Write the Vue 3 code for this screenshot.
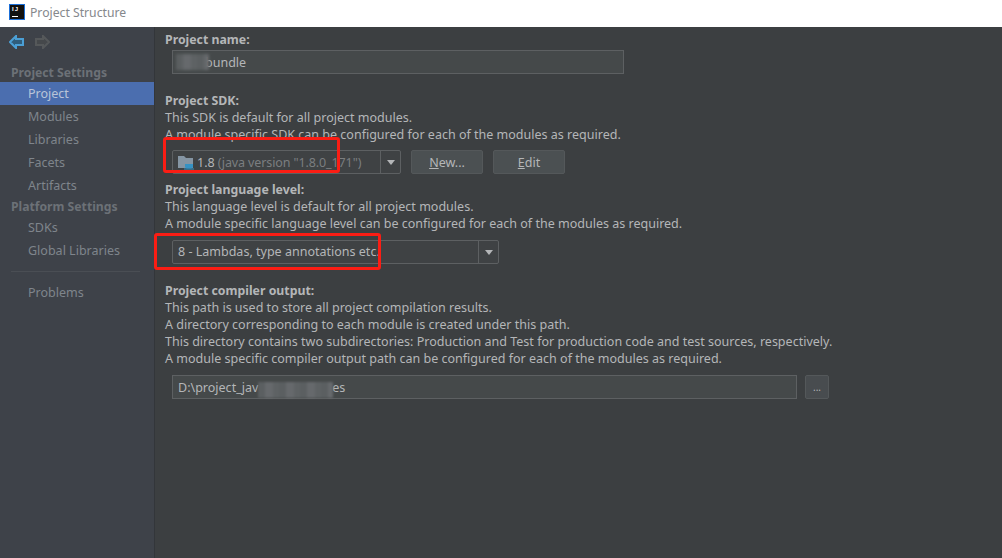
<script setup>
const projectItems = ['Modules', 'Libraries', 'Facets', 'Artifacts']
const platformItems = ['SDKs', 'Global Libraries']
</script>

<template>
  <div class="win">
    <header class="titlebar">
      <div class="logo"><span class="logo-t">IJ</span><span class="logo-u"></span></div>
      <span class="title">Project Structure</span>
    </header>
    <div class="body">
      <aside class="side">
        <div class="nav">
          <svg width="15" height="14" viewBox="0 0 15 14"><path d="M1 7 7 1v3h7v6H7v3z" fill="#2f5d7c" stroke="#4b9fd5" stroke-width="2"/></svg>
          <svg width="15" height="14" viewBox="0 0 15 14"><path d="M14 7 8 1v3H1v6h7v3z" fill="#45484b" stroke="#55585a" stroke-width="2"/></svg>
        </div>
        <div class="group first">Project Settings</div>
        <div class="item active">Project</div>
        <div v-for="i in projectItems" :key="i" class="item">{{ i }}</div>
        <div class="group">Platform Settings</div>
        <div v-for="i in platformItems" :key="i" class="item">{{ i }}</div>
        <div class="sep"></div>
        <div class="item">Problems</div>
      </aside>
      <main class="main">
        <h4 class="h first">Project name:</h4>
        <div class="field name"><span class="val">bundle</span></div>

        <h4 class="h sdk">Project SDK:</h4>
        <p>This SDK is default for all project modules.</p>
        <p>A module specific SDK can be configured for each of the modules as required.</p>
        <div class="row sdkrow">
          <div class="combo c1">
            <div class="combo-val">
              <svg class="jdk" width="17" height="16" viewBox="0 0 17 16">
                <path d="M0 2h6l2 2h7v10H0z" fill="#8595a3"/>
                <path d="M7 10h8v2.5a2 2 0 0 1-2 2H9a2 2 0 0 1-2-2z" fill="#3592c4"/>
                <path d="M6 15h10" stroke="#3592c4"/>
              </svg>
              <span>1.8</span><span class="dim">(java version "1.8.0_171")</span>
            </div>
            <div class="arrow"><i></i></div>
          </div>
          <button class="btn b1"><u>N</u>ew...</button>
          <button class="btn b2"><u>E</u>dit</button>
        </div>

        <h4 class="h lang">Project language level:</h4>
        <p>This language level is default for all project modules.</p>
        <p>A module specific language level can be configured for each of the modules as required.</p>
        <div class="combo c2">
          <div class="combo-val lvl">8 - Lambdas, type annotations etc.</div>
          <div class="arrow"><i></i></div>
        </div>

        <h4 class="h out">Project compiler output:</h4>
        <p>This path is used to store all project compilation results.</p>
        <p>A directory corresponding to each module is created under this path.</p>
        <p>This directory contains two subdirectories: Production and Test for production code and test sources, respectively.</p>
        <p>A module specific compiler output path can be configured for each of the modules as required.</p>
        <div class="row outrow">
          <div class="field path"><span class="val">D:\project_jav<span class="gap"></span>es</span></div>
          <button class="btn dots">...</button>
        </div>
      </main>
    </div>
    <div class="blur b-name"></div>
    <div class="blur b-path"></div>
    <div class="mark m1"></div>
    <div class="mark m2"></div>
  </div>
</template>

<style scoped>
.win { position: relative; width: 1002px; height: 558px; overflow: hidden; font-family: "Noto Sans", sans-serif; font-size: 12.52px; line-height: 17px; color: #b4b6b8; background: #3c3f41; }
.titlebar { height: 27px; background: #fff; display: flex; align-items: center; padding-left: 9px; gap: 5px; box-sizing: border-box; }
.logo { width: 16px; height: 16px; background: #111; border: 1px solid #1b6fd8; box-sizing: border-box; position: relative; margin-bottom: 4px; }
.logo-t { position: absolute; left: 2px; top: 1px; font-family: "Liberation Sans", sans-serif; font-size: 6px; line-height: 7px; letter-spacing: 1px; font-weight: 700; color: #fff; }
.logo-u { position: absolute; left: 2px; bottom: 2px; width: 6px; height: 1px; background: #fff; }
.title { color: #85888c; font-size: 12.2px; margin-bottom: 3px; }
.body { display: flex; height: 531px; }
.side { width: 155px; box-sizing: border-box; background: #3e4249; border-right: 1px solid #33363a; color: #7f858c; }
.nav { height: 29px; display: flex; align-items: center; gap: 11px; padding-left: 9px; box-sizing: border-box; }
.group { height: 19px; line-height: 19px; padding-left: 11px; font-size: 12.2px; font-weight: 700; color: #6c7177; }
.group.first { margin-top: 7px; }
.item { height: 23px; line-height: 23px; padding-left: 28px; }
.item.active { background: #4b6eaf; color: #b9c4d8; }
.sep { height: 1px; background: #4a4e54; margin: 9px 14px 9px 11px; }
.main { flex: 1; padding-left: 10px; }
.h { margin: 0; font-size: 12.3px; line-height: 17px; font-weight: 700; color: #b4b6b8; }
.h.first { margin-top: 4px; }
.h.sdk { margin-top: 18px; }
.h.lang { margin-top: 7px; }
.h.out { margin-top: 18px; }
p { margin: 0; height: 17px; white-space: nowrap; }
.field { height: 24px; box-sizing: border-box; border: 1px solid #5d6062; background: #45494a; display: flex; align-items: center; padding-left: 5px; color: #b4b6b8; }
.name { width: 452px; margin: 2px 0 0 7px; }
.name .val { padding-left: 27px; }
.row { display: flex; }
.sdkrow { margin: 7px 0 0 7px; }
.combo { height: 24px; box-sizing: border-box; border: 1px solid #5d6062; background: #3f4244; border-radius: 2px; display: flex; }
.c1 { width: 229px; }
.c2 { width: 327px; margin: 8px 0 0 7px; }
.combo-val { flex: 1; display: flex; align-items: center; padding-left: 5px; gap: 3px; white-space: nowrap; }
.lvl { padding-bottom: 2px; box-sizing: border-box; }
.dim { color: #7b7e80; letter-spacing: -0.12px; }
.jdk { margin-right: -1px; }
.arrow { width: 19px; border-left: 1px solid #5d6062; display: flex; align-items: center; justify-content: center; }
.arrow i { width: 0; height: 0; border-left: 4px solid transparent; border-right: 4px solid transparent; border-top: 5px solid #b4b6b8; }
.btn { height: 24px; box-sizing: border-box; border: 1px solid #54585a; border-radius: 2px; background: #4b5052; color: #b4b6b8; font: inherit; padding: 0; }
.b1 { width: 72px; margin-left: 10px; }
.b2 { width: 72px; margin-left: 10px; }
.outrow { margin: 8px 0 0 7px; }
.path { width: 625px; }
.dots { width: 24px; margin-left: 8px; font-size: 10px; background: #484c4f; }
.blur { position: absolute; background: repeating-linear-gradient(90deg, #5b5f61 0 7px, #66696c 7px 15px, #5e6264 15px 21px); }
.b-name { left: 176px; top: 54px; width: 33px; height: 16px; filter: blur(1.5px); }
.b-path { left: 258px; top: 382px; width: 75px; height: 16px; filter: blur(1px); }
.gap { display: inline-block; width: 74px; }
.mark { position: absolute; border: 3px solid #fb1d14; border-radius: 3px; box-sizing: border-box; }
.m1 { left: 163px; top: 137px; width: 177px; height: 36px; }
.m2 { left: 154px; top: 233px; width: 227px; height: 37px; }
</style>
